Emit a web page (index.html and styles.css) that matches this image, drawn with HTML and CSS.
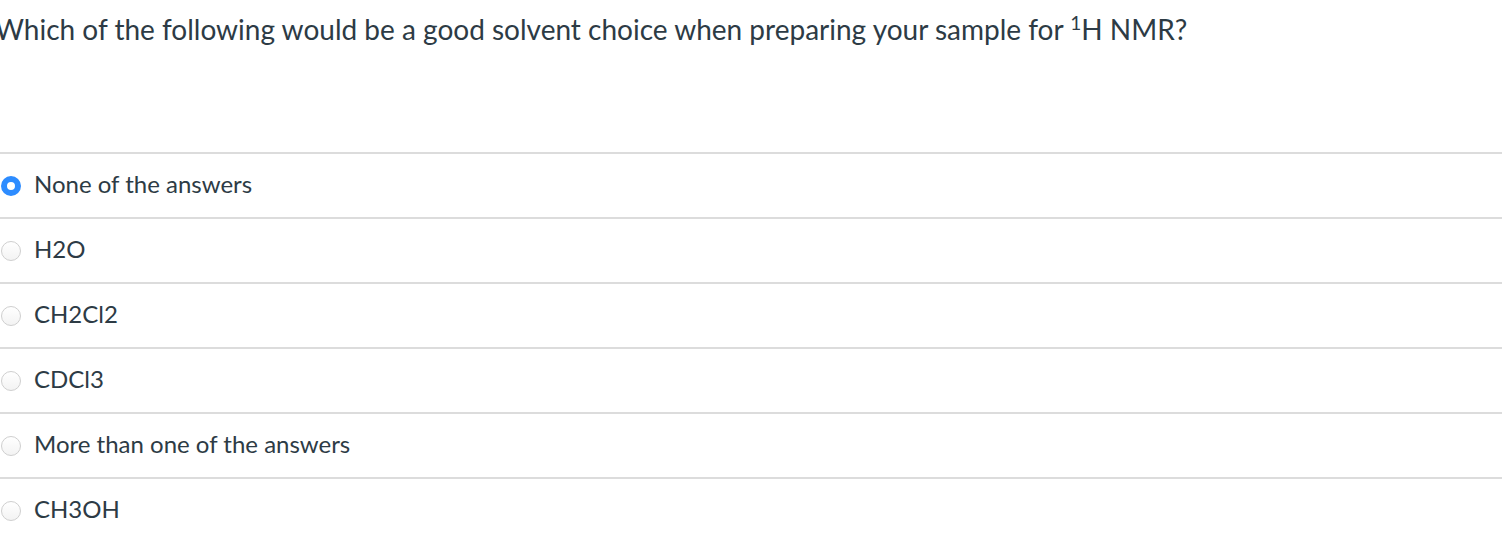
FILE: index.html
```html
<!DOCTYPE html>
<html>
<head>
<meta charset="utf-8">
<link rel="stylesheet" href="styles.css">
</head>
<body>
<div class="quiz">
  <div class="question">Which of the following would be a good solvent choice when preparing your sample for <sup>1</sup>H NMR?</div>
  <div class="answers">
    <div class="answer"><span class="radio checked"></span><span class="label">None of the answers</span></div>
    <div class="answer"><span class="radio"></span><span class="label">H2O</span></div>
    <div class="answer"><span class="radio"></span><span class="label">CH2Cl2</span></div>
    <div class="answer"><span class="radio"></span><span class="label">CDCl3</span></div>
    <div class="answer"><span class="radio"></span><span class="label">More than one of the answers</span></div>
    <div class="answer"><span class="radio"></span><span class="label">CH3OH</span></div>
  </div>
</div>
</body>
</html>
```

FILE: styles.css
```css
html, body {
  margin: 0;
  padding: 0;
  background: #fff;
}
body {
  font-family: Lato, "Open Sans", sans-serif;
  color: #2d3b45;
  overflow: hidden;
}
.quiz {
  width: 1502px;
}
.question {
  font-size: 28px;
  line-height: 34px;
  padding-top: 12px;
  margin-left: -5px;
  height: 152px;
  box-sizing: border-box;
  white-space: nowrap;
}
.question sup {
  font-size: 19px;
  line-height: 0;
  vertical-align: 10px;
}
.answers {
  display: flex;
  flex-direction: column;
}
.answer {
  display: flex;
  align-items: center;
  gap: 13px;
  height: 63px;
  border-top: 2px solid #dcdcdc;
  padding-left: 1px;
}
.radio {
  width: 20px;
  height: 20px;
  box-sizing: border-box;
  border-radius: 50%;
  border: 1px solid #cfcfcf;
  background: linear-gradient(#fff, #f3f3f3);
  flex: none;
}
.radio.checked {
  border: 6.5px solid #2d8cff;
  background: #fff;
}
.label {
  font-size: 24px;
  line-height: 26px;
  padding-bottom: 3px;
}
```
